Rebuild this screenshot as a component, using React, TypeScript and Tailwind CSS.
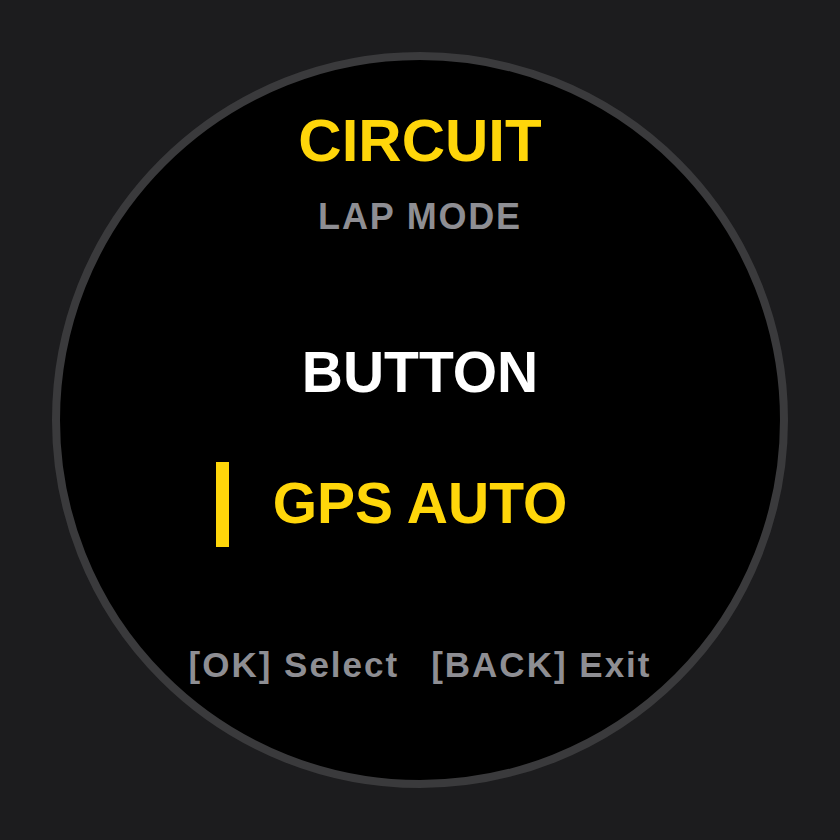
import React from 'react';

// Lap mode picker shown on the round watch face
const FONT = { fontFamily: '"Liberation Sans", Arial, sans-serif' } as const;

export default function App() {
  return (
    <div
      className="flex h-[840px] w-[840px] items-center justify-center bg-[#1c1c1e]"
      style={FONT}
    >
      <div className="flex h-[736px] w-[736px] flex-col items-center rounded-full border-8 border-[#3a3a3c] bg-black pt-[51px]">
        <div className="text-[60px] font-bold leading-[60px] text-[#ffd60a]">CIRCUIT</div>
        <div className="mt-[28px] text-[36px] font-bold leading-[36px] tracking-[1.8px] text-[#8e8e93]">
          LAP MODE
        </div>

        <div className="mt-[109px] text-[57px] font-bold leading-[57px] text-white">BUTTON</div>

        <div className="relative mt-[74px] text-[57px] font-bold leading-[57px] text-[#ffd60a]">
          <span className="absolute left-[-57px] top-[-13.5px] h-[85px] w-[13px] bg-[#ffd60a]" />
          GPS AUTO
        </div>

        <div className="mt-[115px] flex gap-8 text-[35px] font-bold leading-[35px] tracking-[2px] text-[#8e8e93]">
          <span>[OK] Select</span>
          <span>[BACK] Exit</span>
        </div>
      </div>
    </div>
  );
}
